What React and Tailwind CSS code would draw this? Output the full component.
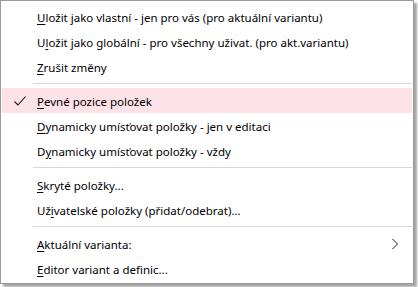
const items = [
  { pre: "", key: "U", post: "ložit jako vlastní - jen pro vás (pro aktuální variantu)" },
  { pre: "U", key: "l", post: "ožit jako globální - pro všechny uživat. (pro akt.variantu)" },
  { pre: "", key: "Z", post: "rušit změny" },
  "sep",
  { pre: "", key: "P", post: "evné pozice položek", checked: true },
  { pre: "", key: "D", post: "ynamicky umísťovat položky - jen v editaci" },
  { pre: "D", key: "y", post: "namicky umísťovat položky - vždy" },
  "sep",
  { pre: "", key: "S", post: "kryté položky..." },
  { pre: "Už", key: "i", post: "vatelské položky (přidat/odebrat)..." },
  "sep",
  { pre: "", key: "A", post: "ktuální varianta:", submenu: true },
  { pre: "", key: "E", post: "ditor variant a definic..." },
];

function Check() {
  return (
    <svg width="16" height="16" viewBox="0 0 16 16" className="absolute left-[10px] top-[5px]">
      <path d="M2.5 8.5 L6 12 L13.5 3.5" fill="none" stroke="#1a1a1a" strokeWidth="1.1" />
    </svg>
  );
}

function Chevron() {
  return (
    <svg width="10" height="12" viewBox="0 0 10 12" className="absolute right-[12px] top-[7px]">
      <path d="M2.5 1 L7.5 6 L2.5 11" fill="none" stroke="#1a1a1a" strokeWidth="1" />
    </svg>
  );
}

export default function App() {
  return (
    <div className="w-[418px] h-[287px] bg-white">
      <div
        className="w-[414px] h-[284px] bg-white border border-[#9a9a9a] pt-[3px] pb-[2px] shadow-[3px_3px_2px_rgba(0,0,0,0.35)] text-[11.5px] text-[#000]"
        style={{ fontFamily: '"Noto Sans", "Open Sans", sans-serif' }}
      >
        {items.map((it, i) =>
          it === "sep" ? (
            <div key={i} className="h-[9px] flex items-center pl-[32px] pr-[1px]">
              <div className="h-[1px] w-full bg-[#d7d7d7]" />
            </div>
          ) : (
            <div
              key={i}
              className={`relative h-[25px] mx-[1px] flex items-center pl-[35px] pt-[2px] ${it.checked ? "bg-[#fde3e7]" : ""}`}
            >
              {it.checked && <Check />}
              <span className="leading-none whitespace-nowrap">
                {it.pre}
                <span className="underline underline-offset-[2px]">{it.key}</span>
                {it.post}
              </span>
              {it.submenu && <Chevron />}
            </div>
          )
        )}
      </div>
    </div>
  );
}
